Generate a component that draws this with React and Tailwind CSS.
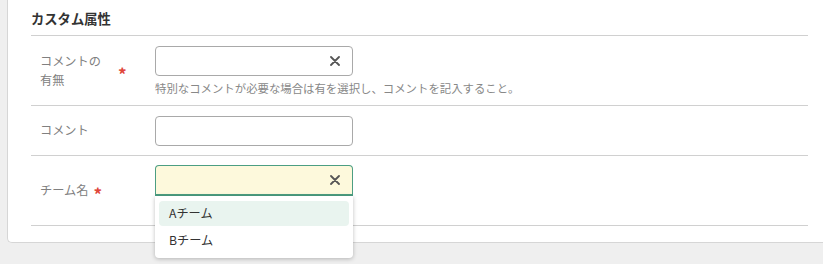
const font = { fontFamily: '"Noto Sans CJK JP", "Noto Sans", sans-serif' };

const ClearIcon = () => (
  <svg width="10" height="10" viewBox="0 0 10 10" className="text-[#555]">
    <path d="M1 1 L9 9 M9 1 L1 9" stroke="currentColor" strokeWidth="1.8" strokeLinecap="round" />
  </svg>
);

const Required = () => (
  <span className="translate-y-[3px] text-[17px] font-bold leading-none text-[#e0463a]">*</span>
);

export default function App() {
  return (
    <div className="h-[264px] w-[823px] overflow-hidden bg-[#efefef] pl-[7px]" style={font}>
      <div className="h-[243px] w-[840px] rounded-bl-[5px] border-b border-l border-[#d6d6d6] bg-white pl-[23px]">
        <div className="w-[777px]">
          <div className="flex h-[36px] items-center border-b border-[#d0d0d0] pt-[3px] text-[13.3px] font-bold text-[#333]">
            カスタム属性
          </div>

          {/* コメントの有無 */}
          <div className="flex h-[70px] border-b border-[#d0d0d0]">
            <div className="flex w-[124px] items-center pl-[9px] text-[12.2px] leading-[19px] text-[#808080]">
              <span className="w-[78px]">
                コメントの
                <br />
                有無
              </span>
              <Required />
            </div>
            <div className="pt-[10px]">
              <div className="flex h-[30px] w-[198px] items-center justify-end rounded-[4px] border border-[#a9a9a9] pr-[12px]">
                <ClearIcon />
              </div>
              <p className="mt-[4px] text-[11.4px] leading-[16px] text-[#888]">
                特別なコメントが必要な場合は有を選択し、コメントを記入すること。
              </p>
            </div>
          </div>

          {/* コメント */}
          <div className="flex h-[50px] border-b border-[#d0d0d0]">
            <div className="flex w-[124px] items-center pl-[9px] text-[12.2px] text-[#808080]">コメント</div>
            <div className="pt-[10px]">
              <div className="h-[30px] w-[198px] rounded-[4px] border border-[#a9a9a9]" />
            </div>
          </div>

          {/* チーム名 */}
          <div className="flex h-[70px] border-b border-[#d0d0d0]">
            <div className="flex w-[124px] items-center gap-[5px] pl-[9px] text-[12.2px] text-[#808080]">
              <span>チーム名</span>
              <Required />
            </div>
            <div className="relative pt-[9px]">
              <div className="flex h-[31px] w-[198px] items-center justify-end rounded-t-[4px] border border-b-2 border-[#4c9e82] bg-[#fdf9dc] pr-[12px]">
                <ClearIcon />
              </div>
              <div className="absolute left-0 top-[40px] z-10 w-[198px] rounded-b-[4px] bg-white px-[4px] pb-[4px] pt-[5px] shadow-[0_1px_4px_rgba(0,0,0,0.25)]">
                <div className="flex h-[25px] items-center rounded-[4px] bg-[#e9f4ef] px-[10px] text-[12.2px] text-[#333]">
                  Aチーム
                </div>
                <div className="flex h-[28px] items-center px-[10px] text-[12.2px] text-[#333]">Bチーム</div>
              </div>
            </div>
          </div>
        </div>
      </div>
    </div>
  );
}
